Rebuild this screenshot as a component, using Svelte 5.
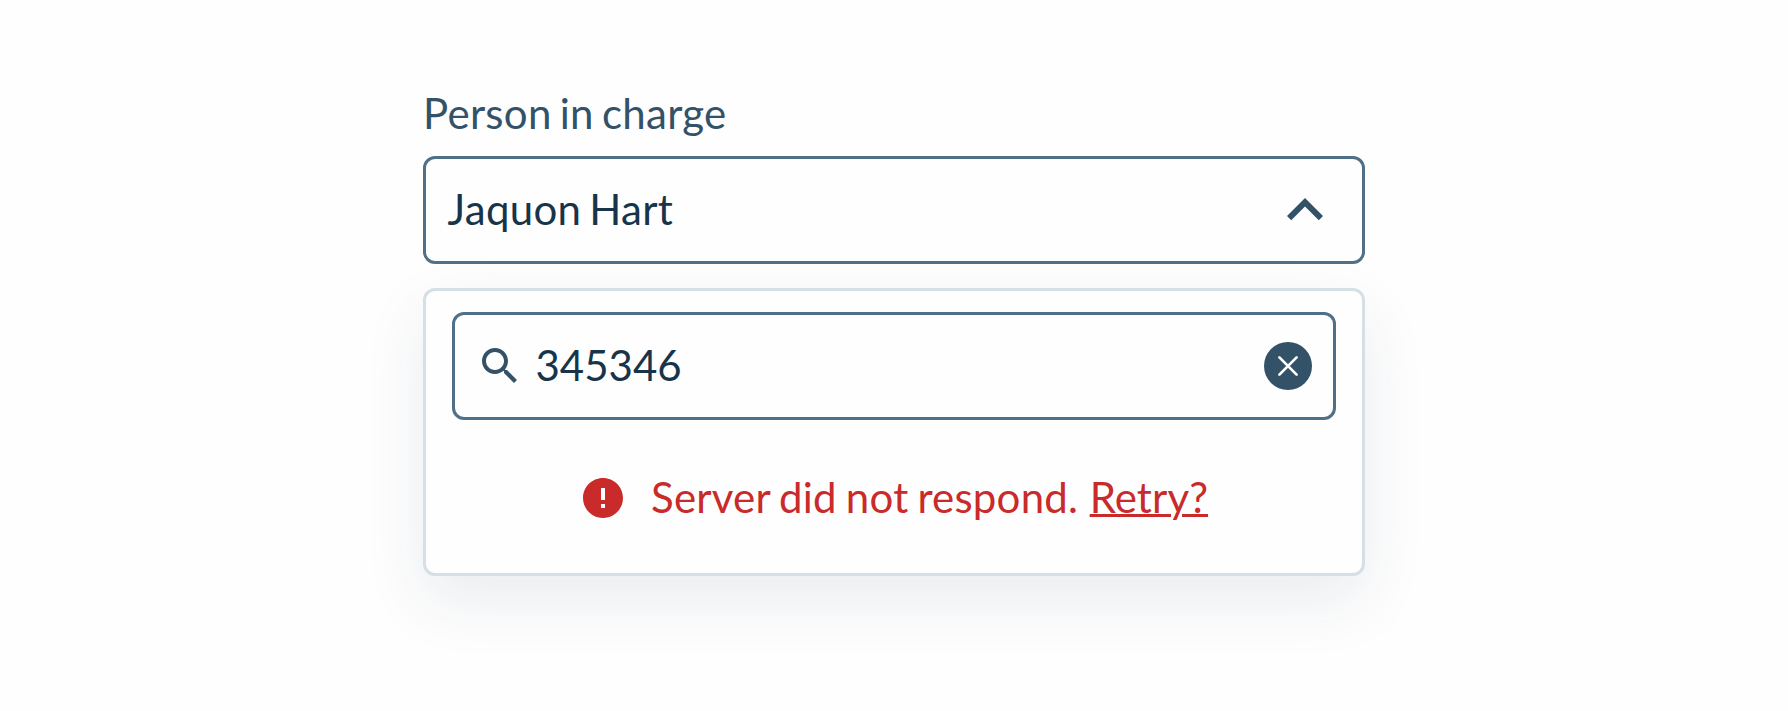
<script>
  let query = $state('345346');
  let person = $state('Jaquon Hart');
</script>

<main>
  <div class="field">
    <div class="label">Person in charge</div>
    <div class="select" role="combobox" aria-expanded="true" aria-controls="panel" tabindex="0">
      <span class="value">{person}</span>
      <svg class="chevron" viewBox="0 0 24 24"><path d="M12 8l-6 6 1.41 1.41L12 10.83l4.59 4.58L18 14z" /></svg>
    </div>
    <div class="panel" id="panel">
      <div class="search">
        <svg class="icon" viewBox="0 0 24 24"><path d="M15.5 14h-.79l-.28-.27C15.41 12.59 16 11.11 16 9.5 16 5.91 13.09 3 9.5 3S3 5.91 3 9.5 5.91 16 9.5 16c1.61 0 3.09-.59 4.23-1.57l.27.28v.79l5 4.99L20.49 19l-4.99-5zm-6 0C7.01 14 5 11.99 5 9.5S7.01 5 9.5 5 14 7.01 14 9.5 11.99 14 9.5 14z" /></svg>
        <span class="value query">{query}</span>
        <svg class="icon" viewBox="0 0 48 48">
          <circle cx="24" cy="24" r="24" />
          <path class="cross" d="M15.4 15.4L32.6 32.6M32.6 15.4L15.4 32.6" />
        </svg>
      </div>
      <div class="error">
        <svg class="icon" viewBox="0 0 24 24"><path d="M12 2C6.48 2 2 6.48 2 12s4.480 10 10 10 10-4.480 10-10S17.520 2 12 2zm1 15h-2v-2h2v2zm0-4h-2V7h2v6z" /></svg>
        <span class="message">Server did not respond.</span>
        <span class="retry">Retry?</span>
      </div>
    </div>
  </div>
</main>

<style>
  :global(body) {
    background: #fefefe;
  }
  main {
    box-sizing: border-box;
    height: 711px;
    padding-top: 83px;
    display: flex;
    justify-content: center;
    align-items: flex-start;
    font-family: Lato, sans-serif;
    font-size: 42px;
    line-height: 60px;
    letter-spacing: 0.3px;
    word-spacing: -3px;
    color: #18344b;
  }
  .field {
    width: 942px;
  }
  .label {
    height: 73px;
    color: #335269;
  }
  .select,
  .search {
    box-sizing: border-box;
    height: 108px;
    border: 3px solid #507087;
    border-radius: 12px;
    display: flex;
    align-items: center;
    padding: 0 21px;
    background: #fefefe;
  }
  .value {
    flex: 1;
    padding: 0 0 2px 0.5px;
  }
  .query {
    margin-left: 11px;
    letter-spacing: 0;
  }
  .chevron {
    width: 72px;
    height: 72px;
    fill: #335167;
  }
  .icon {
    width: 48px;
    height: 48px;
    flex: none;
    fill: #335167;
  }
  .cross {
    stroke: #fff;
    stroke-width: 2.7;
    stroke-linecap: round;
  }
  .panel {
    box-sizing: border-box;
    height: 288px;
    margin-top: 24px;
    padding: 21px 26px;
    border: 3px solid #d4dfe6;
    border-radius: 12px;
    background: #fefefe;
    box-shadow: 0 25px 64px rgba(24, 44, 84, 0.085);
  }
  .error {
    display: flex;
    align-items: center;
    height: 60px;
    margin-top: 48px;
    padding-left: 127px;
    letter-spacing: 0.22px;
    word-spacing: -2px;
    color: #c92a2a;
  }
  .error .icon {
    fill: #c92a2a;
  }
  .message {
    margin-left: 24px;
    padding-bottom: 2px;
  }
  .retry {
    margin-left: 11.5px;
    padding-bottom: 2px;
    letter-spacing: 0.1px;
    text-decoration: underline;
    text-decoration-thickness: 3px;
    text-underline-offset: 1px;
  }
</style>
